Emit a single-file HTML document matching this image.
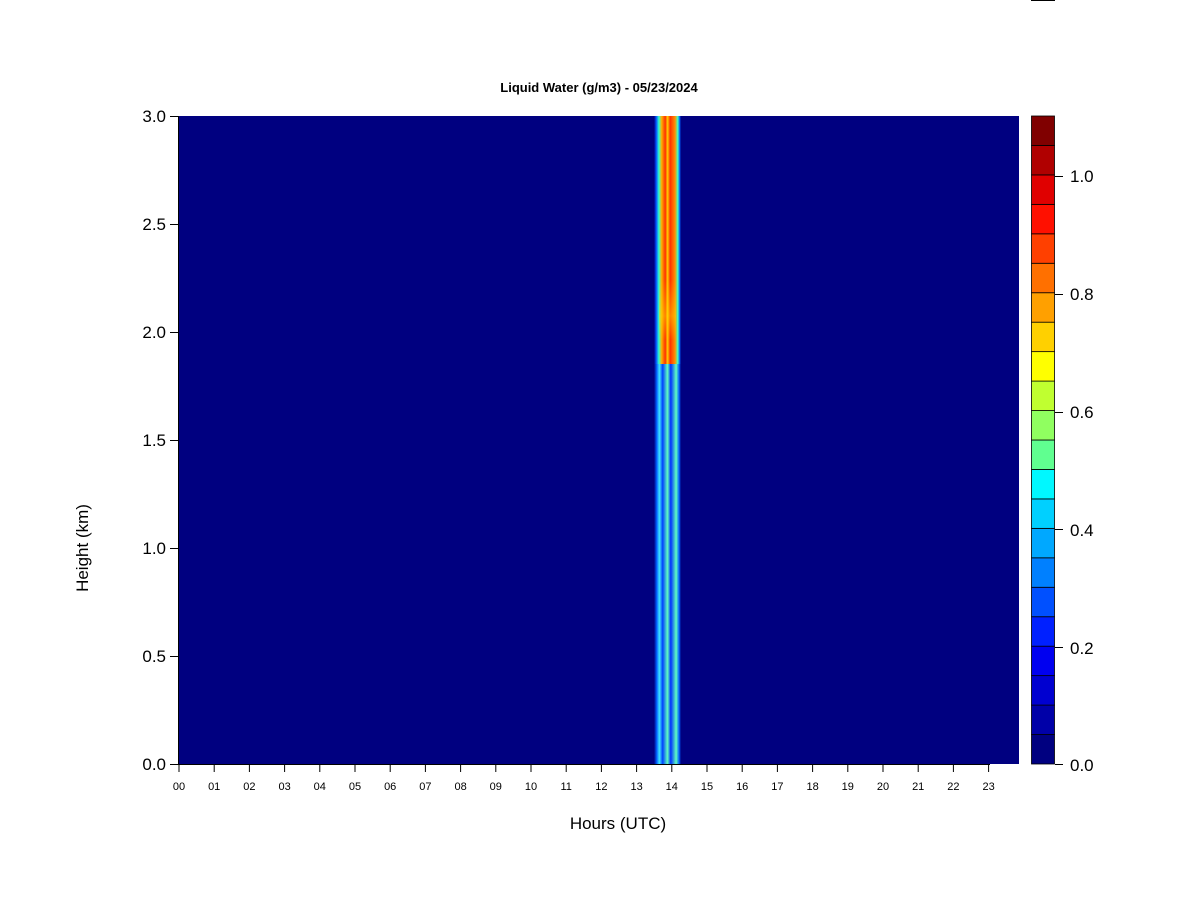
<!DOCTYPE html>
<html><head><meta charset="utf-8"><style>html,body{margin:0;padding:0;background:#fff}svg{display:block}</style></head><body>
<svg width="1200" height="900" xmlns="http://www.w3.org/2000/svg" font-family="Liberation Sans, Arial, sans-serif">
<defs>
<linearGradient id="top" x1="0" x2="1" y1="0" y2="0">
<stop offset="0" stop-color="#000080"/><stop offset="0.08" stop-color="#0050ff"/><stop offset="0.18" stop-color="#30ffd0"/><stop offset="0.28" stop-color="#ffb000"/><stop offset="0.42" stop-color="#ff3000"/><stop offset="0.5" stop-color="#ffd000"/><stop offset="0.6" stop-color="#ff3000"/><stop offset="0.78" stop-color="#ff9000"/><stop offset="0.88" stop-color="#40ffc0"/><stop offset="0.95" stop-color="#0060ff"/><stop offset="1" stop-color="#000080"/>
</linearGradient>
<linearGradient id="bot" x1="0" x2="1" y1="0" y2="0">
<stop offset="0" stop-color="#000080"/><stop offset="0.1" stop-color="#0060ff"/><stop offset="0.2" stop-color="#40e8ff"/><stop offset="0.32" stop-color="#0040ff"/><stop offset="0.5" stop-color="#60ffc0"/><stop offset="0.62" stop-color="#0030ff"/><stop offset="0.82" stop-color="#60ffc0"/><stop offset="0.93" stop-color="#0060ff"/><stop offset="1" stop-color="#000080"/>
</linearGradient>
<linearGradient id="yel" x1="0" x2="0" y1="0" y2="1">
<stop offset="0" stop-color="#ffe000" stop-opacity="0"/><stop offset="0.6" stop-color="#ffe000" stop-opacity="0.45"/><stop offset="1" stop-color="#ffe000" stop-opacity="0"/>
</linearGradient>
</defs>
<text x="599" y="92" font-size="13" font-weight="bold" text-anchor="middle">Liquid Water (g/m3) - 05/23/2024</text>
<rect x="1031" y="0" width="24" height="1" fill="#000"/>
<rect x="178" y="116" width="841" height="648" fill="#000080"/>
<rect x="654" y="116" width="27" height="248" fill="url(#top)"/>
<rect x="659" y="280" width="17" height="60" fill="url(#yel)"/>
<rect x="654" y="364" width="27" height="400" fill="url(#bot)"/>
<g stroke="#000" stroke-width="1">
<line x1="178.5" y1="116" x2="178.5" y2="764"/>
<line x1="170" y1="116.5" x2="178" y2="116.5"/><line x1="170" y1="224.5" x2="178" y2="224.5"/><line x1="170" y1="332.5" x2="178" y2="332.5"/><line x1="170" y1="440.5" x2="178" y2="440.5"/><line x1="170" y1="548.5" x2="178" y2="548.5"/><line x1="170" y1="656.5" x2="178" y2="656.5"/><line x1="170" y1="764.5" x2="178" y2="764.5"/>
<line x1="178" y1="764.5" x2="990" y2="764.5"/>
</g>
<g font-size="17" text-anchor="end">
<text x="166" y="122">3.0</text><text x="166" y="230">2.5</text><text x="166" y="338">2.0</text><text x="166" y="446">1.5</text><text x="166" y="554">1.0</text><text x="166" y="662">0.5</text><text x="166" y="770">0.0</text>
</g>
<text transform="translate(88,548) rotate(-90)" font-size="17" text-anchor="middle">Height (km)</text>
<text x="618" y="829" font-size="17" text-anchor="middle">Hours (UTC)</text>
<g id="xt" font-size="11" text-anchor="middle"></g>
<g id="cb"></g>
<g font-size="17">
<text x="1070" y="182">1.0</text><text x="1070" y="300">0.8</text><text x="1070" y="418">0.6</text><text x="1070" y="536">0.4</text><text x="1070" y="654">0.2</text><text x="1070" y="771">0.0</text>
</g>
<g stroke="#000"><line x1="1055" y1="176.5" x2="1063" y2="176.5"/><line x1="1055" y1="294.5" x2="1063" y2="294.5"/><line x1="1055" y1="412.5" x2="1063" y2="412.5"/><line x1="1055" y1="529.5" x2="1063" y2="529.5"/><line x1="1055" y1="647.5" x2="1063" y2="647.5"/><line x1="1055" y1="764.5" x2="1063" y2="764.5"/></g>
<script>
var ns="http://www.w3.org/2000/svg",xt=document.getElementById('xt');
for(var i=0;i<24;i++){var x=179+i*35.2;var l=document.createElementNS(ns,'line');l.setAttribute('x1',x);l.setAttribute('x2',x);l.setAttribute('y1',764);l.setAttribute('y2',772);l.setAttribute('stroke','#000');xt.appendChild(l);var t=document.createElementNS(ns,'text');t.setAttribute('x',x);t.setAttribute('y',790);t.textContent=(i<10?'0':'')+i;xt.appendChild(t);}
var c=["#000080","#0000a8","#0000d0","#0000f0","#0020ff","#0050ff","#0080ff","#00a8ff","#00d0ff","#00f8ff","#60ff90","#90ff60","#c0ff30","#ffff00","#ffd000","#ffa000","#ff7000","#ff4000","#ff1000","#e00000","#b00000","#800000"];
var cb=document.getElementById('cb'),h=648/22;
for(var k=0;k<22;k++){var r=document.createElementNS(ns,'rect');r.setAttribute('x',1031.5);r.setAttribute('width',23);r.setAttribute('y',764-(k+1)*h);r.setAttribute('height',h);r.setAttribute('fill',c[k]);r.setAttribute('stroke','#000');r.setAttribute('stroke-width','0.8');cb.appendChild(r);}
</script>
</svg>
</body></html>
